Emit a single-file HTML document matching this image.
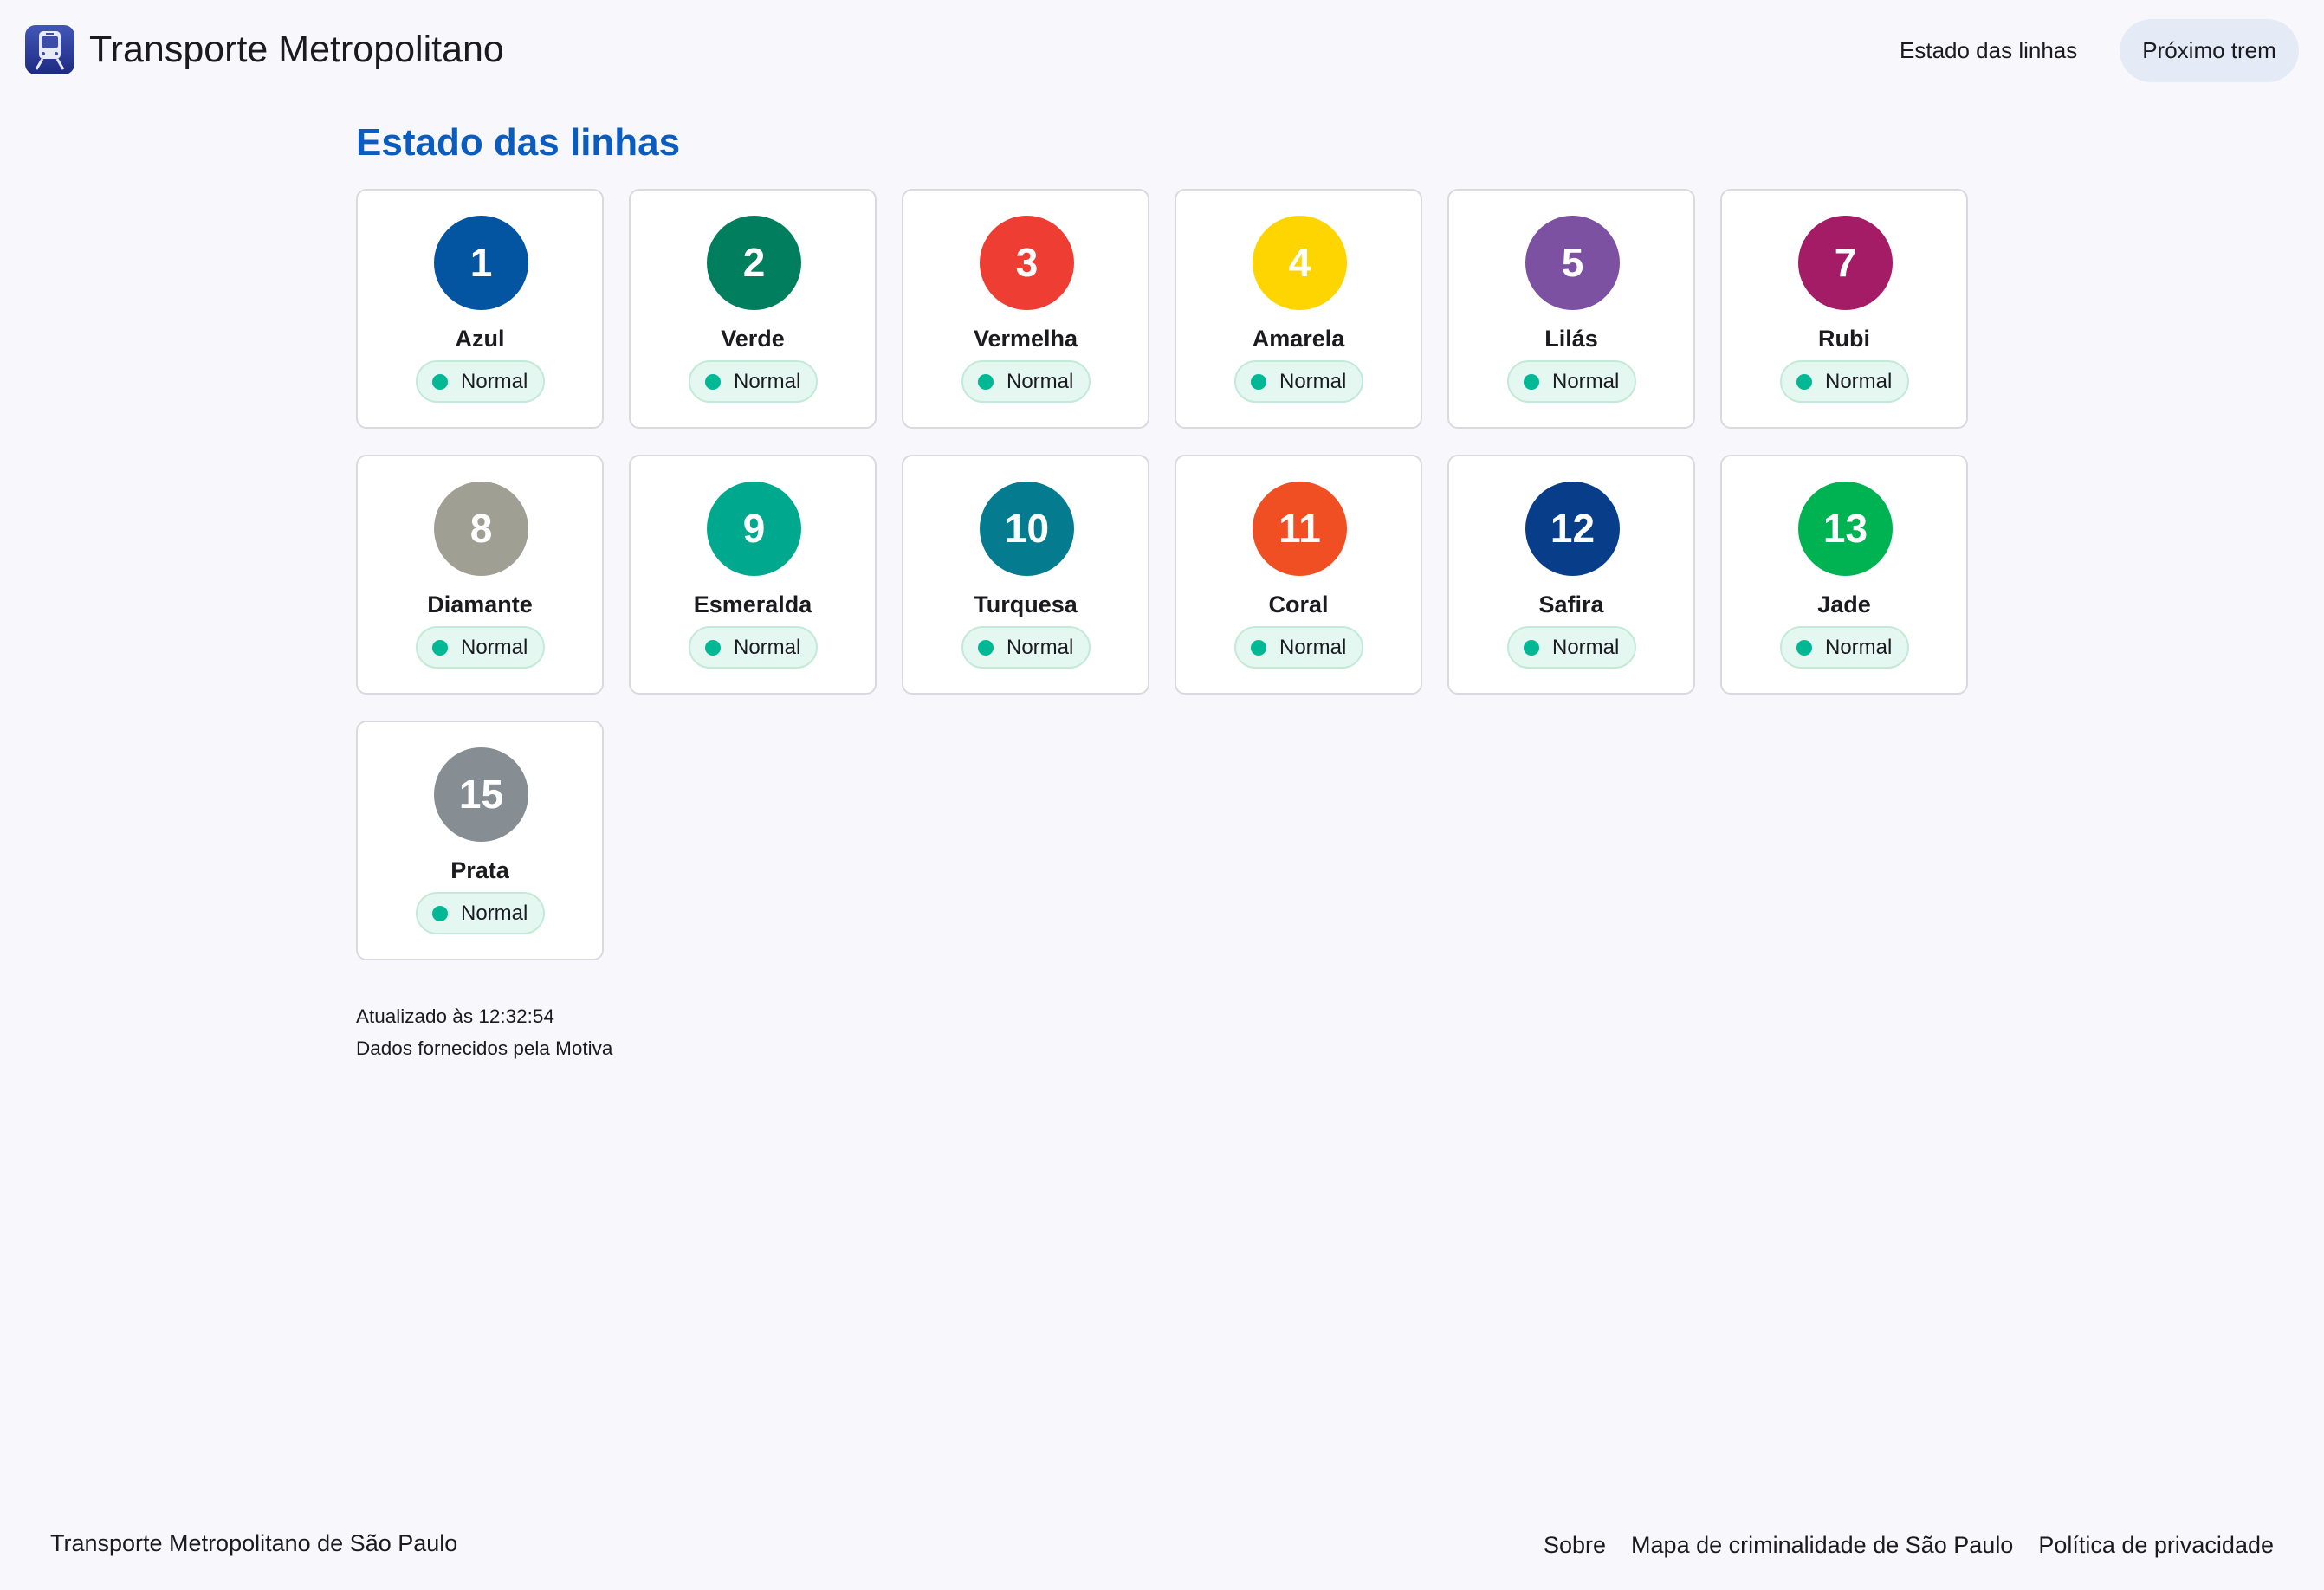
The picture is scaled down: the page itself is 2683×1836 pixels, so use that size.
<!DOCTYPE html>
<html><head><meta charset="utf-8"><style>
*{margin:0;padding:0;box-sizing:border-box}
body{width:2683px;height:1836px;background:#f8f8fc;font-family:"Liberation Sans",sans-serif;color:#1b1b1f;position:relative;overflow:hidden}
.abs{position:absolute}
.title{left:103px;top:29px;font-size:43px;line-height:56px;color:#1b1b1f}
.nav{left:2193px;top:40px;font-size:26px;line-height:36px}
.btn{left:2447px;top:22px;width:207px;height:73px;border-radius:37px;background:#e4ebf6;font-size:26px;line-height:73px;text-align:center}
h1{position:absolute;left:411px;top:137px;font-size:44px;line-height:56px;color:#0a5cbf;font-weight:bold}
.card{position:absolute;width:286px;height:277px;background:#fff;border:2px solid #d9d9e0;border-radius:12px;text-align:center}
.circ{position:absolute;left:88px;top:29px;width:109px;height:109px;border-radius:50%;color:#fff;font-weight:bold;font-size:46px;line-height:109px}
.name{position:absolute;left:0;right:0;top:153px;font-weight:bold;font-size:27px;line-height:36px}
.pill{position:absolute;left:67px;top:196px;width:149px;height:49px;border-radius:25px;background:#e4f7f1;border:2px solid #c3ead9;font-size:24px;line-height:45px;text-align:left;padding-left:50px}
.pill:before{content:"";position:absolute;left:17px;top:14px;width:18px;height:18px;border-radius:50%;background:#00b894}
.small{left:411px;font-size:22.5px;line-height:30px}
.foot{top:1765px;font-size:27px;line-height:34px}
</style></head><body>
<svg class="abs" style="left:29px;top:29px" width="57" height="57" viewBox="0 0 57 57">
<defs><linearGradient id="g" x1="0" y1="0" x2="0" y2="1"><stop offset="0" stop-color="#4157b8"/><stop offset="1" stop-color="#1e2a80"/></linearGradient></defs>
<rect width="57" height="57" rx="12" fill="url(#g)"/>
<rect x="16" y="7" width="25" height="32" rx="5" fill="#e8eaf6"/>
<rect x="19" y="13" width="19" height="13" rx="2" fill="#3b4da8"/>
<rect x="24" y="9" width="9" height="2" fill="#3b4da8"/>
<circle cx="21" cy="33" r="2" fill="#3b4da8"/><circle cx="36" cy="33" r="2" fill="#3b4da8"/>
<path d="M20 39 L13 51 M37 39 L44 51" stroke="#e8eaf6" stroke-width="3"/>
</svg>
<div class="abs title">Transporte Metropolitano</div>
<div class="abs nav">Estado das linhas</div>
<div class="abs btn">Próximo trem</div>
<h1>Estado das linhas</h1>

<div class="card" style="left:411px;top:218px"><div class="circ" style="background:#0455a1">1</div><div class="name">Azul</div><div class="pill">Normal</div></div>
<div class="card" style="left:726px;top:218px"><div class="circ" style="background:#007e5e">2</div><div class="name">Verde</div><div class="pill">Normal</div></div>
<div class="card" style="left:1041px;top:218px"><div class="circ" style="background:#ee3e34">3</div><div class="name">Vermelha</div><div class="pill">Normal</div></div>
<div class="card" style="left:1356px;top:218px"><div class="circ" style="background:#ffd500">4</div><div class="name">Amarela</div><div class="pill">Normal</div></div>
<div class="card" style="left:1671px;top:218px"><div class="circ" style="background:#7d51a2">5</div><div class="name">Lilás</div><div class="pill">Normal</div></div>
<div class="card" style="left:1986px;top:218px"><div class="circ" style="background:#a41b66">7</div><div class="name">Rubi</div><div class="pill">Normal</div></div>

<div class="card" style="left:411px;top:525px"><div class="circ" style="background:#9f9f94">8</div><div class="name">Diamante</div><div class="pill">Normal</div></div>
<div class="card" style="left:726px;top:525px"><div class="circ" style="background:#00a88e">9</div><div class="name">Esmeralda</div><div class="pill">Normal</div></div>
<div class="card" style="left:1041px;top:525px"><div class="circ" style="background:#047b8f">10</div><div class="name">Turquesa</div><div class="pill">Normal</div></div>
<div class="card" style="left:1356px;top:525px"><div class="circ" style="background:#f04e23">11</div><div class="name">Coral</div><div class="pill">Normal</div></div>
<div class="card" style="left:1671px;top:525px"><div class="circ" style="background:#083e89">12</div><div class="name">Safira</div><div class="pill">Normal</div></div>
<div class="card" style="left:1986px;top:525px"><div class="circ" style="background:#00b352">13</div><div class="name">Jade</div><div class="pill">Normal</div></div>

<div class="card" style="left:411px;top:832px"><div class="circ" style="background:#868e93">15</div><div class="name">Prata</div><div class="pill">Normal</div></div>

<div class="abs small" style="top:1159px">Atualizado às 12:32:54</div>
<div class="abs small" style="top:1196px">Dados fornecidos pela Motiva</div>

<div class="abs foot" style="left:58px">Transporte Metropolitano de São Paulo</div>
<div class="abs foot" style="right:58px;top:1767px;white-space:nowrap;font-size:27px">Sobre<span style="display:inline-block;width:29px"></span>Mapa de criminalidade de São Paulo<span style="display:inline-block;width:29px"></span>Política de privacidade</div>
</body></html>
